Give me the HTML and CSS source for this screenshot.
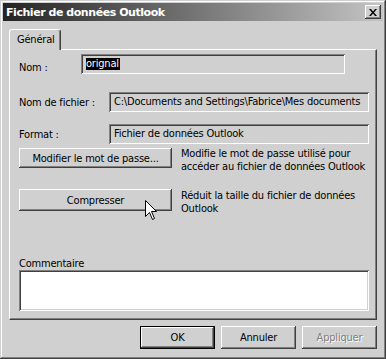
FILE: index.html
```html
<!DOCTYPE html>
<html>
<head>
  <meta charset="UTF-8">
  <title>Fichier de données Outlook</title>
  <link rel="stylesheet" href="styles.css">
</head>
<body>
  <div class="window">
    <div class="titlebar">
      <span class="title">Fichier de données Outlook</span>
      <button class="close" aria-label="Fermer">
        <svg width="8" height="7" viewBox="0 0 8 7">
          <path d="M0 0 L2 0 L4 2.5 L6 0 L8 0 L5 3.5 L8 7 L6 7 L4 4.5 L2 7 L0 7 L3 3.5 Z" fill="#000"/>
        </svg>
      </button>
    </div>

    <div class="content">
      <div class="tabs">
        <div class="tab">Général</div>
      </div>

      <div class="panel">
        <div class="row">
          <span class="label label-short label-low">Nom :</span>
          <div class="field field-nom"><span class="sel">orignal</span></div>
        </div>
        <div class="row row-file">
          <span class="label label-long">Nom de fichier :</span>
          <div class="field field-wide">C:\Documents and Settings\Fabrice\Mes documents</div>
        </div>
        <div class="row row-format">
          <span class="label label-long">Format :</span>
          <div class="field field-wide">Fichier de données Outlook</div>
        </div>

        <div class="action">
          <button class="btn btn-wide">Modifier le mot de passe...</button>
          <p class="desc desc-up">Modifie le mot de passe utilisé pour<br>accéder au fichier de données Outlook</p>
        </div>
        <div class="action action-compact">
          <button class="btn btn-wide btn-tall">Compresser</button>
          <p class="desc">Réduit la taille du fichier de données<br>Outlook</p>
          <svg class="cursor" width="12" height="21" viewBox="0 0 12 21">
            <path d="M0.5 0.5 L0.5 16.5 L4.5 12.5 L7.5 19.5 L9.5 18.5 L6.5 11.5 L11.5 11.5 Z" fill="#fff" stroke="#000" stroke-width="1"/>
          </svg>
        </div>

        <div class="comment">
          <label for="comment">Commentaire</label>
          <textarea id="comment"></textarea>
        </div>
      </div>

      <div class="buttons">
        <button class="btn btn-dlg btn-default">OK</button>
        <button class="btn btn-dlg">Annuler</button>
        <button class="btn btn-dlg btn-disabled">Appliquer</button>
      </div>
    </div>
  </div>
</body>
</html>
```

FILE: styles.css
```css
body {
  margin: 0;
  font-family: "DejaVu Sans Condensed", "Liberation Sans", Arial, sans-serif;
  font-size: 11px;
  letter-spacing: -0.2px;
  color: #000;
  background-color: #d0d0d0;
}
.window {
  width: 386px;
  height: 359px;
  box-sizing: border-box;
  padding: 3px;
  display: flex;
  flex-direction: column;
  background-color: #d0d0d0;
  box-shadow: inset -1px -1px #404040, inset 1px 1px #d0d0d0,
              inset -2px -2px #808080, inset 2px 2px #fff;
}
.titlebar {
  height: 18px;
  flex-shrink: 0;
  display: flex;
  align-items: center;
  justify-content: space-between;
  padding: 0 2px 0 3px;
  background: linear-gradient(to right, #242424, #c4c4c4);
  color: #fff;
  font-family: "DejaVu Sans", sans-serif;
  font-weight: bold;
  font-size: 11px;
  letter-spacing: -0.45px;
}
.close {
  width: 16px;
  height: 14px;
  padding: 0;
  border: none;
  display: flex;
  align-items: center;
  justify-content: center;
  background-color: #d0d0d0;
  box-shadow: inset -1px -1px #404040, inset 1px 1px #fff,
              inset -2px -2px #808080;
}
.content {
  flex: 1;
  display: flex;
  flex-direction: column;
  padding: 8px 6px 0;
}
.tabs {
  display: flex;
  height: 20px;
  flex-shrink: 0;
}
.tab {
  position: relative;
  z-index: 1;
  width: 52px;
  height: 21px;
  box-sizing: border-box;
  padding: 3px 0 0 7px;
  border: 1px solid;
  border-color: #fff #404040 transparent #fff;
  border-bottom: none;
  border-radius: 3px 3px 0 0;
  box-shadow: inset -1px 0 #808080;
  background-color: #d0d0d0;
  line-height: 13px;
}
.panel {
  height: 271px;
  flex-shrink: 0;
  box-sizing: border-box;
  padding: 4px 7px 0 9px;
  border: 1px solid;
  border-color: #fff #404040 #404040 #fff;
  box-shadow: inset -1px -1px #808080;
  overflow: hidden;
}
.row {
  display: flex;
  align-items: center;
  height: 20px;
}
.row-file {
  margin-top: 18px;
}
.row-format {
  margin-top: 12px;
}
.label-short {
  width: 62px;
}
.label-long {
  width: 90px;
}
.label-low {
  margin-top: 6px;
}
.field {
  height: 20px;
  box-sizing: border-box;
  padding-left: 5px;
  line-height: 20px;
  white-space: nowrap;
  overflow: hidden;
  box-shadow: inset 1px 1px #808080, inset -1px -1px #fff,
              inset 2px 2px #404040, inset -2px -2px #d0d0d0;
}
.field-nom {
  width: 264px;
}
.field-wide {
  width: 260px;
}
.sel {
  display: inline-block;
  padding: 0 1px 0 0;
  line-height: 12px;
  background-color: #000;
  color: #fff;
}
.action {
  position: relative;
  display: flex;
  align-items: flex-start;
  margin-top: 4px;
}
.action-compact {
  margin-top: 16px;
}
.btn {
  padding: 0;
  border: none;
  font-family: inherit;
  font-size: 11px;
  letter-spacing: inherit;
  color: #000;
  background-color: #d0d0d0;
  box-shadow: inset -1px -1px #404040, inset 1px 1px #fff,
              inset -2px -2px #808080;
}
.btn-wide {
  width: 153px;
  height: 20px;
  flex-shrink: 0;
}
.btn-tall {
  height: 22px;
}
.desc {
  margin: 0 0 0 9px;
  line-height: 13px;
  white-space: nowrap;
}
.desc-up {
  margin-top: -1px;
}
.cursor {
  position: absolute;
  left: 126px;
  top: 11px;
}
.comment {
  margin-top: 43px;
}
.comment label {
  display: block;
  line-height: 12px;
}
.comment textarea {
  display: block;
  width: 350px;
  height: 41px;
  margin: 0;
  box-sizing: border-box;
  border: none;
  resize: none;
  background-color: #fff;
  box-shadow: inset 1px 1px #808080, inset -1px -1px #fff,
              inset 2px 2px #404040, inset -2px -2px #d0d0d0;
}
.buttons {
  display: flex;
  justify-content: flex-end;
  gap: 6px;
  margin-top: 6px;
}
.btn-dlg {
  width: 75px;
  height: 23px;
}
.btn-default {
  box-shadow: inset 0 0 0 1px #000, inset -2px -2px #404040,
              inset 2px 2px #fff, inset -3px -3px #808080;
}
.btn-disabled {
  color: #808080;
  text-shadow: 1px 1px #fff;
}
```
